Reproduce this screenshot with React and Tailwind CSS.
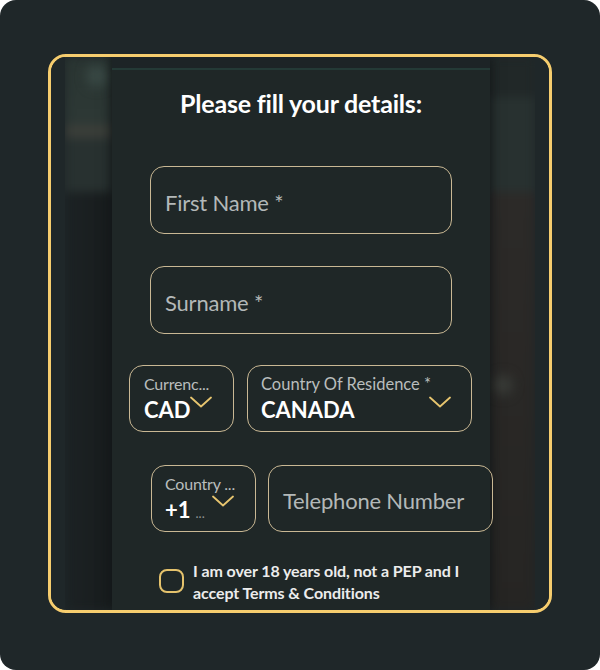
const lato = { fontFamily: 'Lato, "Open Sans", sans-serif' }

function Chevron({ className }) {
  return (
    <svg viewBox="0 0 22 12" className={className} fill="none" stroke="#e7c56f" strokeWidth="1.8" strokeLinecap="round" strokeLinejoin="round">
      <path d="M1 1.5 L11 10.5 L21 1.5" />
    </svg>
  )
}

function TextField({ label }) {
  return (
    <div className="ml-[38px] w-[302px] h-[68px] rounded-[14px] border border-[#c9b894] flex items-center pl-[14px] pt-[6px]">
      <span className="text-[22px] text-[#b3b8b8] leading-[28px] tracking-[-0.2px]">{label}</span>
    </div>
  )
}

export default function App() {
  return (
    <div className="w-[600px] h-[670px] bg-white" style={lato}>
      <div className="w-full h-full rounded-[16px] bg-[#1f2729] pt-[54px] pl-[48px]">
        <div className="w-[504px] h-[559px] rounded-[18px] border-[3px] border-[#f6cd6e] overflow-hidden flex">
          {/* left padding */}
          <div className="w-[14px] shrink-0 bg-[#1f2729]" />

          {/* left blurred backdrop */}
          <div className="w-[47px] shrink-0 relative overflow-hidden">
            <div className="absolute inset-0 flex flex-col blur-[5px]">
              <div className="h-[68px] bg-gradient-to-b from-[#2a3532] to-[#2d3835]" />
              <div className="h-[13px] bg-[#3b3e39]" />
              <div className="h-[54px] bg-[#283130]" />
              <div className="flex-1 bg-gradient-to-r from-[#1c2224] to-[#181c1d]" />
            </div>
            <div className="absolute left-[22px] top-[8px] w-[20px] h-[22px] rounded-full bg-[#3a4a46] blur-[6px]" />
          </div>

          {/* modal column */}
          <div className="w-[378px] shrink-0 bg-[#1d2426] pt-[11px] shadow-[0_0_12px_rgba(0,0,0,0.5)] relative z-10">
            <div className="h-full bg-[#1f2727] border-t-2 border-[#243a36]">
              <h1 className="text-center text-white font-bold text-[25px] pt-[18px] leading-[30px] tracking-[-0.2px]">
                Please fill your details:
              </h1>

              <div className="mt-[48px]">
                <TextField label="First Name *" />
              </div>
              <div className="mt-[32px]">
                <TextField label="Surname *" />
              </div>

              {/* currency + residence */}
              <div className="mt-[31px] ml-[17px] flex gap-[13px]">
                <div className="w-[105px] h-[67px] rounded-[14px] border border-[#c9b894] pl-[14px] pt-[8px] relative">
                  <div className="text-[16px] text-[#b9bdbd] leading-[20px] tracking-[-0.2px]">Currenc...</div>
                  <div className="text-[22px] font-bold text-white leading-[28px] mt-[2px]">CAD</div>
                  <Chevron className="absolute left-[60px] top-[30px] w-[22px] h-[12px]" />
                </div>
                <div className="w-[225px] h-[67px] rounded-[14px] border border-[#c9b894] pl-[13px] pt-[8px] relative">
                  <div className="text-[16.5px] text-[#b9bdbd] leading-[20px]">Country Of Residence *</div>
                  <div className="text-[22px] font-bold text-white leading-[28px] mt-[2px]">CANADA</div>
                  <Chevron className="absolute left-[181px] top-[30px] w-[22px] h-[12px]" />
                </div>
              </div>

              {/* phone */}
              <div className="mt-[33px] ml-[39px] flex gap-[12px]">
                <div className="w-[105px] h-[67px] shrink-0 rounded-[14px] border border-[#c9b894] pl-[13px] pt-[8px] relative">
                  <div className="text-[16px] text-[#b9bdbd] leading-[20px] tracking-[-0.2px]">Country ...</div>
                  <div className="flex items-baseline gap-[5px] mt-[2px]">
                    <span className="text-[22px] font-bold text-white leading-[28px]">+1</span>
                    <span className="text-[13px] text-[#8e9393]">...</span>
                  </div>
                  <Chevron className="absolute left-[60px] top-[29px] w-[22px] h-[12px]" />
                </div>
                <div className="w-[225px] h-[67px] shrink-0 rounded-[14px] border border-[#c9b894] pl-[14px] pt-[4px] flex items-center">
                  <span className="text-[22px] text-[#b3b8b8] leading-[28px] tracking-[-0.2px]">Telephone Number</span>
                </div>
              </div>

              {/* consent */}
              <div className="mt-[28px] ml-[47px] flex items-start gap-[9px]">
                <div className="w-[25px] h-[24px] mt-[9px] shrink-0 rounded-[8px] border-2 border-[#e4c26c]" />
                <p className="text-[16px] font-bold text-[#ececec] leading-[22px] tracking-[-0.1px] whitespace-nowrap">
                  I am over 18 years old, not a PEP and I<br />
                  accept Terms &amp; Conditions
                </p>
              </div>
            </div>
          </div>

          {/* right blurred backdrop */}
          <div className="w-[45px] shrink-0 relative overflow-hidden">
            <div className="absolute inset-0 flex flex-col blur-[5px]">
              <div className="h-[40px] bg-[#212828]" />
              <div className="h-[95px] bg-[#283130]" />
              <div className="flex-1 bg-gradient-to-b from-[#2c2a28] to-[#262523]" />
            </div>
            <div className="absolute left-[4px] top-[318px] w-[18px] h-[20px] rounded-full bg-[#3a3d39] blur-[6px]" />
          </div>

          {/* right padding */}
          <div className="w-[14px] shrink-0 bg-[#1f2729]" />
        </div>
      </div>
    </div>
  )
}
